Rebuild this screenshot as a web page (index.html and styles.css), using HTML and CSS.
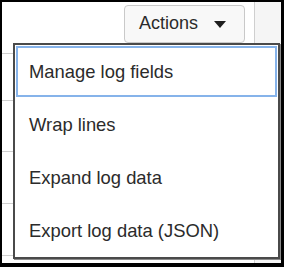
FILE: index.html
```html
<!DOCTYPE html>
<html>
<head>
<meta charset="utf-8">
<link rel="stylesheet" href="styles.css">
</head>
<body>
<div class="frame">
  <div class="main">
    <div class="toolbar">
      <button class="actions">Actions<span class="caret"></span></button>
    </div>
    <div class="row r1"></div>
    <div class="row r2"></div>
    <div class="row r3"></div>
    <div class="row r4"></div>
  </div>
  <div class="divider"></div>
  <div class="side"></div>
  <ul class="menu">
    <li class="item focused">Manage log fields</li>
    <li class="item">Wrap lines</li>
    <li class="item">Expand log data</li>
    <li class="item">Export log data (JSON)</li>
  </ul>
</div>
</body>
</html>
```

FILE: styles.css
```css
html, body {
  margin: 0;
  padding: 0;
  background: #fff;
}
.frame {
  position: relative;
  box-sizing: border-box;
  width: 284px;
  height: 267px;
  border-style: solid;
  border-color: #000;
  border-width: 2px 3px 4px 2px;
  background: #fff;
  display: grid;
  grid-template-columns: 252px 1px 1fr;
  font-family: "Liberation Sans", Arial, sans-serif;
  color: #2b2b2b;
  overflow: hidden;
}
.main {
  display: flex;
  flex-direction: column;
}
.toolbar {
  box-sizing: border-box;
  height: 52px;
  padding-top: 3px;
  padding-right: 9px;
  display: flex;
  justify-content: flex-end;
  align-items: flex-start;
  border-bottom: 1px solid #cfcfcf;
}
.actions {
  box-sizing: border-box;
  width: 121px;
  height: 38px;
  margin: 0;
  padding: 0 0 2px 14px;
  display: flex;
  align-items: center;
  border: 1px solid #c9c9c9;
  border-radius: 4px;
  background: #f8f8f8;
  font-family: "Liberation Sans", Arial, sans-serif;
  font-size: 18px;
  color: #2b2b2b;
}
.caret {
  margin-left: 16px;
  margin-top: 2px;
  width: 0;
  height: 0;
  border-left: 6.5px solid transparent;
  border-right: 6.5px solid transparent;
  border-top: 7px solid #1e1e1e;
}
.row {
  box-sizing: border-box;
  border-bottom: 1px solid #cfcfcf;
}
.r1 { height: 47px; }
.r2 { height: 51px; }
.r3 { height: 52px; }
.r4 { height: 52px; }
.divider {
  background: #cfcfcf;
}
.side {
  background: #f5f5f5;
}
.menu {
  position: absolute;
  left: 11px;
  top: 41px;
  box-sizing: border-box;
  width: 267px;
  margin: 0;
  padding: 0;
  list-style: none;
  background: #fff;
  border: 2px solid #4a4a4a;
  box-shadow: 1px 1px 0 #8a8a8a;
}
.item {
  box-sizing: border-box;
  height: 53px;
  padding-left: 14px;
  display: flex;
  align-items: center;
  font-size: 18.4px;
  color: #2b2b2b;
}
.item.focused {
  outline: 2px solid #86b3ea;
  outline-offset: -3px;
}
```
